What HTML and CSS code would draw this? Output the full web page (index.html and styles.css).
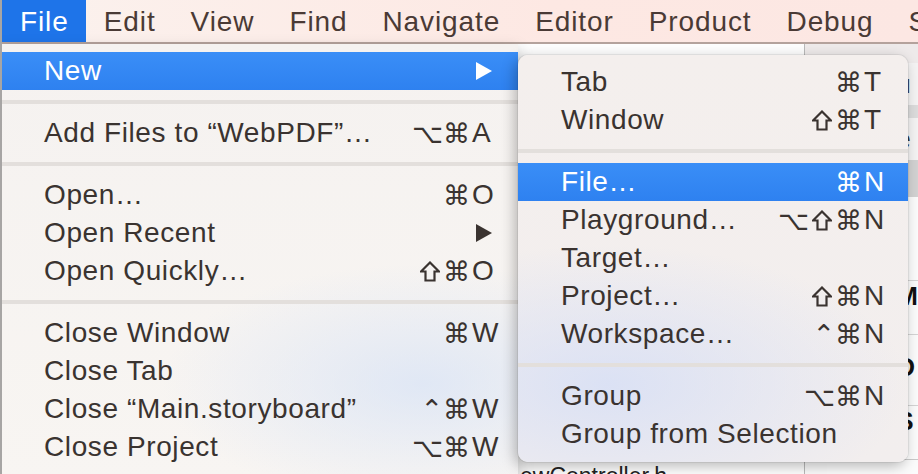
FILE: index.html
```html
<!DOCTYPE html>
<html lang="en">

<head>
    <meta charset="UTF-8">
    <meta name="viewport" content="width=device-width, initial-scale=1.0">
    <title>Xcode File Menu</title>
    <link rel="stylesheet" href="styles.css">
</head>

<body>
    <div class="screen">
        <!-- window behind the menus -->
        <div class="win">
            <div class="win-main">
                <div class="file-row">ewController.h</div>
            </div>
            <div class="win-side">
                <div class="side-row top"></div>
                <div class="side-row">u</div>
                <div class="side-band"></div>
                <div class="side-row">e</div>
                <div class="side-band dark"></div>
                <div class="side-blank"></div>
                <div class="side-row bold line">M</div>
                <div class="side-row bold line tall">D</div>
                <div class="side-row bold line">S</div>
                <div class="side-end"></div>
            </div>
        </div>

        <div class="edge"></div>

        <div class="menubar">
            <span class="bar-item active">File</span>
            <span class="bar-item">Edit</span>
            <span class="bar-item">View</span>
            <span class="bar-item">Find</span>
            <span class="bar-item">Navigate</span>
            <span class="bar-item">Editor</span>
            <span class="bar-item">Product</span>
            <span class="bar-item">Debug</span>
            <span class="bar-item">Source</span>
        </div>

        <div class="menu main-menu">
            <div class="row hl">
                <span class="label">New</span>
                <svg class="arrow" width="16" height="18" viewBox="0 0 16 18"><polygon points="0,0 16,9 0,18" fill="#fff"/></svg>
            </div>
            <div class="sep"></div>
            <div class="row"><span class="label">Add Files to “WebPDF”…</span><span class="mods">⌥⌘</span><span class="key">A</span></div>
            <div class="sep"></div>
            <div class="row"><span class="label">Open…</span><span class="mods">⌘</span><span class="key">O</span></div>
            <div class="row">
                <span class="label">Open Recent</span>
                <svg class="arrow" width="16" height="18" viewBox="0 0 16 18"><polygon points="0,0 16,9 0,18" fill="#3a3330"/></svg>
            </div>
            <div class="row"><span class="label">Open Quickly…</span><span class="mods"><svg class="shift" width="20" height="21" viewBox="0 0 20 21"><path d="M10 1.5 L19 10.5 H14.5 V19.5 H5.5 V10.5 H1 Z"/></svg>⌘</span><span class="key">O</span></div>
            <div class="sep"></div>
            <div class="row"><span class="label">Close Window</span><span class="mods">⌘</span><span class="key">W</span></div>
            <div class="row"><span class="label">Close Tab</span></div>
            <div class="row"><span class="label">Close “Main.storyboard”</span><span class="mods">⌃⌘</span><span class="key">W</span></div>
            <div class="row"><span class="label">Close Project</span><span class="mods">⌥⌘</span><span class="key">W</span></div>
        </div>

        <div class="menu sub-menu">
            <div class="row"><span class="label">Tab</span><span class="mods">⌘</span><span class="key">T</span></div>
            <div class="row"><span class="label">Window</span><span class="mods"><svg class="shift" width="20" height="21" viewBox="0 0 20 21"><path d="M10 1.5 L19 10.5 H14.5 V19.5 H5.5 V10.5 H1 Z"/></svg>⌘</span><span class="key">T</span></div>
            <div class="sep"></div>
            <div class="row hl"><span class="label">File…</span><span class="mods">⌘</span><span class="key">N</span></div>
            <div class="row"><span class="label">Playground…</span><span class="mods">⌥<svg class="shift" width="20" height="21" viewBox="0 0 20 21"><path d="M10 1.5 L19 10.5 H14.5 V19.5 H5.5 V10.5 H1 Z"/></svg>⌘</span><span class="key">N</span></div>
            <div class="row"><span class="label">Target…</span></div>
            <div class="row"><span class="label">Project…</span><span class="mods"><svg class="shift" width="20" height="21" viewBox="0 0 20 21"><path d="M10 1.5 L19 10.5 H14.5 V19.5 H5.5 V10.5 H1 Z"/></svg>⌘</span><span class="key">N</span></div>
            <div class="row"><span class="label">Workspace…</span><span class="mods">⌃⌘</span><span class="key">N</span></div>
            <div class="sep"></div>
            <div class="row"><span class="label">Group</span><span class="mods">⌥⌘</span><span class="key">N</span></div>
            <div class="row"><span class="label">Group from Selection</span></div>
        </div>
    </div>
</body>

</html>
```

FILE: styles.css
```css
body {
    margin: 0;
    font-family: "Liberation Sans", "DejaVu Sans", sans-serif;
}

.screen {
    position: relative;
    width: 918px;
    height: 474px;
    overflow: hidden;
    background-color: #f2f0f0;
}

/* window behind */
.win {
    position: absolute;
    left: 500px;
    top: 44px;
    right: 0;
    bottom: 0;
    display: flex;
    background-color: #f3f1f1;
}

.win-main {
    width: 315px;
    display: flex;
    flex-direction: column;
    justify-content: flex-end;
    border-right: 1px solid #b9b9b9;
    background-color: #fdfdfd;
}

.file-row {
    height: 9px;
    padding-left: 20px;
    font-size: 23px;
    line-height: 22px;
    color: #222;
    overflow: hidden;
    white-space: nowrap;
}

.win-side {
    flex: 1;
    display: flex;
    flex-direction: column;
    background-color: #fafafa;
}

.side-row {
    height: 42px;
    padding-left: 91px;
    font-size: 26px;
    line-height: 42px;
    color: #333;
    background-color: #f4f3f3;
}

.side-row.top {
    height: 19px;
    background-color: #eeeaea;
}

.side-band {
    height: 13px;
    background-color: #dcdcdc;
}

.side-band.dark {
    height: 37px;
    background-color: #d2d2d2;
}

.side-blank {
    height: 83px;
    background-color: #fbfbfb;
}

.side-row.bold {
    font-weight: bold;
    height: 53px;
    line-height: 30px;
    color: #111;
    background-color: #fbfbfb;
    border-top: 1px solid #d4d4d4;
}

.side-row.tall {
    height: 70px;
    line-height: 64px;
}

.side-end {
    flex: 1;
    margin-left: 22px;
    border-top: 1px solid #c9c9c9;
    background-color: #fbfbfb;
}

.edge {
    position: absolute;
    left: 0;
    top: 0;
    bottom: 0;
    width: 2px;
    background-color: #a7a5a4;
    z-index: 3;
}

/* menu bar */
.menubar {
    position: relative;
    height: 44px;
    display: flex;
    padding-left: 2px;
    background: linear-gradient(90deg, #fbf2ee, #fde8e3 60%, #fce7e3);
    border-bottom: 2px solid #b4a29c;
    box-sizing: border-box;
    white-space: nowrap;
}

.bar-item {
    padding: 0 17px 0 18px;
    font-size: 28px;
    letter-spacing: 0.9px;
    line-height: 44px;
    color: #4a3a35;
}

.bar-item.active {
    background-color: #1e74e9;
    color: #fff;
}

/* menus */
.menu {
    position: absolute;
    box-sizing: border-box;
    font-size: 28px;
    letter-spacing: 0.6px;
    color: #3a3330;
}

.main-menu {
    left: 2px;
    top: 44px;
    width: 516px;
    height: 440px;
    padding-top: 8px;
    background:
        radial-gradient(ellipse 260px 120px at 420px 340px, rgba(214, 226, 246, 0.7), rgba(214, 226, 246, 0)),
        linear-gradient(180deg, #f5f2f0, #f8f5f2);
    box-shadow: 0 6px 14px rgba(0, 0, 0, 0.25);
    z-index: 1;
}

.sub-menu {
    left: 518px;
    top: 55px;
    width: 390px;
    height: 407px;
    padding-top: 8px;
    border-radius: 10px;
    background:
        radial-gradient(ellipse 300px 140px at 90px 330px, rgba(213, 222, 246, 0.8), rgba(213, 222, 246, 0)),
        linear-gradient(180deg, #f4efed, #f2eeee);
    box-shadow: -3px 4px 14px rgba(0, 0, 0, 0.28), 0 0 0 1px rgba(0, 0, 0, 0.06);
    z-index: 2;
}

.row {
    display: flex;
    align-items: center;
    height: 38px;
    padding: 0 17px 0 42px;
    white-space: nowrap;
}

.sub-menu .row {
    padding: 0 15px 0 43px;
}

.row.hl {
    background: linear-gradient(180deg, #3a8ef7, #2e81f0);
    color: #fff;
}

.label {
    flex: 1;
}

.mods {
    display: inline-flex;
    align-items: center;
    gap: 3px;
    font-family: "DejaVu Sans", sans-serif;
    font-size: 27px;
    letter-spacing: 0;
}

.shift {
    fill: none;
    stroke: currentColor;
    stroke-width: 2.2;
}

.key {
    width: 29px;
    padding-left: 2px;
    text-align: left;
}

.arrow {
    margin-right: 9px;
}

.sep {
    height: 4px;
    margin: 10px 0;
    background-color: #e3dfdc;
}
```
